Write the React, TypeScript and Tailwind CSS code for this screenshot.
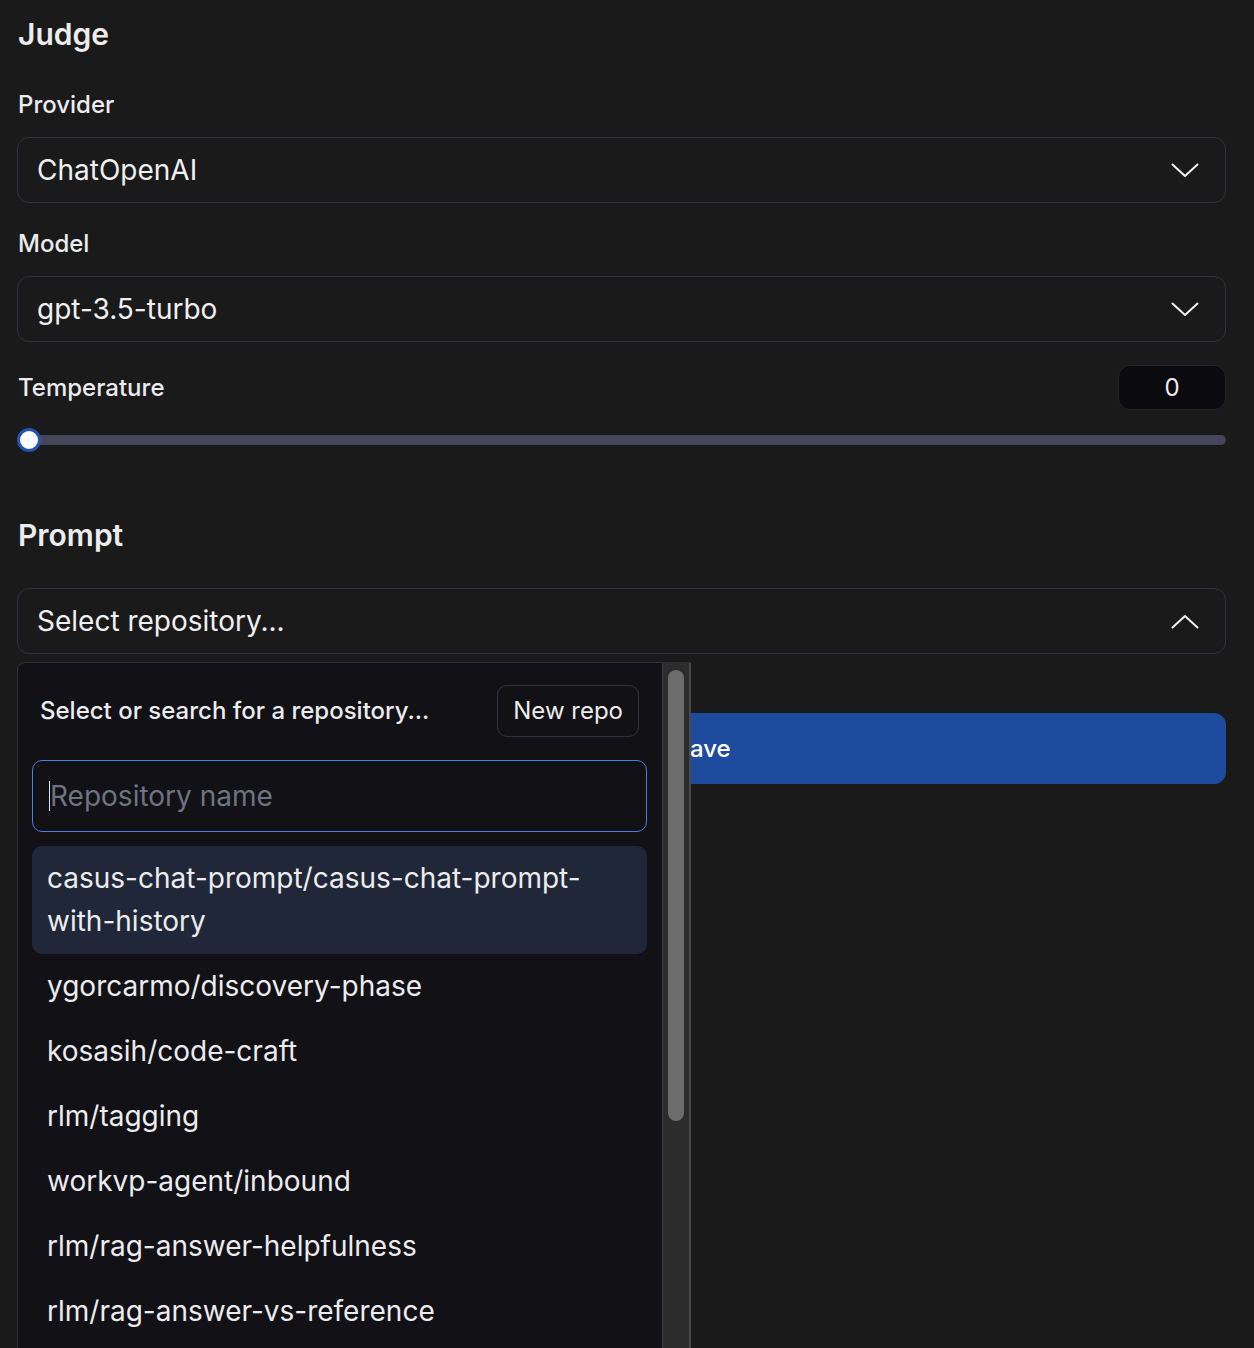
const font = { fontFamily: "Inter, 'Noto Sans', sans-serif" };

function Chevron({ up = false }: { up?: boolean }) {
  return (
    <svg width="28" height="15" viewBox="0 0 28 15" fill="none" className="shrink-0">
      <polyline
        points={up ? "1.5,13.5 14,2 26.5,13.5" : "1.5,1.5 14,13 26.5,1.5"}
        stroke="#f2f2f2"
        strokeWidth="2"
        strokeLinecap="round"
        strokeLinejoin="round"
      />
    </svg>
  );
}

function SelectBox({ value, open = false }: { value: string; open?: boolean }) {
  return (
    <div className="flex h-[66px] items-center justify-between rounded-xl border border-[#2c3442] bg-[#1a1a1b] pl-[19px] pr-[26px]">
      <span className="text-[28px] text-[#f0f0f2]">{value}</span>
      <Chevron up={open} />
    </div>
  );
}

const repos = [
  "ygorcarmo/discovery-phase",
  "kosasih/code-craft",
  "rlm/tagging",
  "workvp-agent/inbound",
  "rlm/rag-answer-helpfulness",
  "rlm/rag-answer-vs-reference",
];

export default function App() {
  return (
    <div
      className="relative min-h-[1348px] overflow-hidden bg-[#1a1a1b] pl-[17px] pr-[28px] pt-4 text-[#ececee]"
      style={font}
    >
      {/* JUDGE */}
      <h1 className="pl-px text-[30px] font-semibold leading-[36px]">Judge</h1>

      <div className="mt-[37px] pl-px text-[24px] font-medium leading-[32px]">Provider</div>
      <div className="mt-4">
        <SelectBox value="ChatOpenAI" />
      </div>

      <div className="mt-[25px] pl-px text-[24px] font-medium leading-[32px]">Model</div>
      <div className="mt-4">
        <SelectBox value="gpt-3.5-turbo" />
      </div>

      <div className="mt-[23px] flex items-center justify-between">
        <span className="pl-px text-[24px] font-medium">Temperature</span>
        <div className="flex h-[45px] w-[108px] items-center justify-center rounded-xl border border-[#22242b] bg-[#0b0b0f] text-[24px]">
          0
        </div>
      </div>

      {/* SLIDER */}
      <div className="relative mt-[18px] flex h-6 items-center">
        <div className="h-[10px] w-full rounded-full bg-[#46455a]" />
        <div className="absolute left-0 top-0 h-6 w-6 rounded-full border-[3px] border-[#2752b0] bg-white" />
      </div>

      {/* PROMPT */}
      <h2 className="mt-[65px] pl-px text-[30px] font-semibold leading-[36px]">Prompt</h2>
      <div className="mt-[35px]">
        <SelectBox value="Select repository..." open />
      </div>

      <div className="mt-[59px] grid grid-cols-2 gap-4">
        <button className="h-[71px] rounded-xl border border-[#2c3442] text-[24px] font-medium">
          Cancel
        </button>
        <button className="h-[71px] rounded-xl bg-[#1f4b9f] pl-[45px] text-left text-[24px] font-medium text-white">
          Save
        </button>
      </div>

      {/* DROPDOWN */}
      <div className="absolute left-[17px] top-[662px] flex h-[720px] w-[674px] rounded-tl-lg border-l border-t border-[#2b303b] bg-[#111116]">
        <div className="flex w-[644px] flex-col">
          <div className="mt-[22px] flex items-center justify-between pl-[22px] pr-[23px]">
            <span className="text-[24px] font-medium">Select or search for a repository...</span>
            <button className="h-[52px] rounded-[10px] border border-[#2c3442] px-[15px] text-[24px]">
              New repo
            </button>
          </div>

          <div className="mt-[23px] pl-[14px] pr-[15px]">
            <div className="flex h-[72px] items-center rounded-[10px] border border-[#4c82dc] pl-[16px]">
              <span className="h-[30px] w-px bg-[#e5e5e5]" />
              <span className="text-[28px] text-[#6f7380]">Repository name</span>
            </div>

            <div className="mt-[14px] rounded-[10px] bg-[#1f2738] px-[15px] py-[11px] text-[28px] leading-[43px]">
              casus-chat-prompt/casus-chat-prompt-
              <br />
              with-history
            </div>

            {repos.map((r) => (
              <div key={r} className="px-[15px] py-[11px] text-[28px] leading-[43px]">
                {r}
              </div>
            ))}
          </div>
        </div>

        {/* SCROLLBAR */}
        <div className="flex w-[29px] justify-center border-l border-r-2 border-l-[#3a3a3a] border-r-[#4a4a4e] bg-[#2c2c2c] pt-[7px]">
          <div className="h-[451px] w-[16px] rounded-full bg-[#6c6c6c]" />
        </div>
      </div>
    </div>
  );
}
